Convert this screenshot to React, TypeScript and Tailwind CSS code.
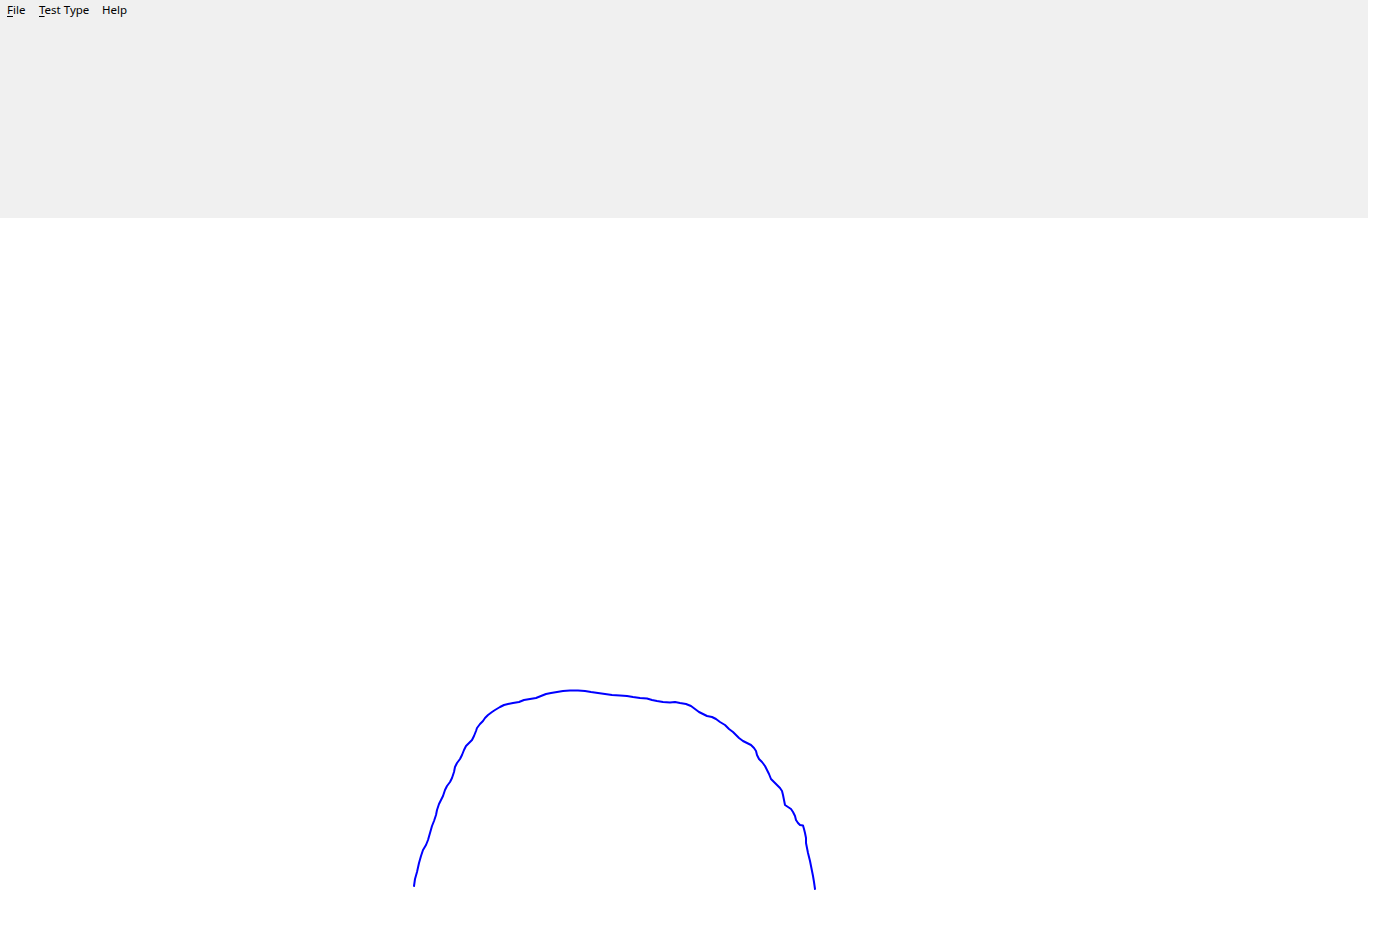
import React from 'react';

const curve: [number, number][] = [
  [414, 886], [415, 879], [417, 872], [419, 863], [421, 856], [423, 850], [426, 845], [428, 840],
  [430, 833], [432, 826], [434, 821], [436, 815], [437, 810], [439, 804], [441, 800], [443, 796],
  [445, 790], [447, 786], [450, 782], [452, 778], [454, 772], [455, 767], [457, 763], [460, 759],
  [462, 755], [464, 750], [466, 746], [469, 743], [472, 740], [474, 736], [476, 731], [477, 728],
  [480, 724], [483, 721], [485, 718], [488, 715], [492, 712], [495, 710], [500, 707], [504, 705],
  [508, 704], [513, 703], [519, 702], [524, 700], [530, 699], [536, 698], [541, 696], [546, 694],
  [551, 693], [557, 692], [563, 691], [570, 690.5], [578, 690.5], [585, 691], [591, 692], [598, 693],
  [605, 694], [612, 695], [620, 695.5], [627, 696], [633, 697], [640, 698], [647, 698.5], [652, 700],
  [657, 701], [663, 702], [670, 702.5], [675, 702], [680, 703], [686, 704], [691, 706], [695, 709],
  [699, 712], [703, 714], [707, 716], [712, 717], [716, 719], [720, 722], [725, 725], [729, 729],
  [733, 732], [736, 735], [739, 738], [743, 741], [747, 743], [751, 745], [754, 748], [756, 751],
  [757, 755], [759, 759], [762, 762], [765, 766], [767, 770], [769, 774], [771, 779], [774, 782],
  [777, 785], [780, 788], [782, 791], [783, 795], [784, 800], [785, 805], [788, 807], [791, 809],
  [793, 812], [795, 816], [796, 820], [798, 823], [800, 825], [803, 825.5], [804, 829], [805, 833],
  [806, 838], [806, 843], [807, 848], [808, 853], [809, 857], [810, 861], [811, 866], [812, 871],
  [813, 876], [814, 882], [815, 889],
];

const TOP = 218;

const MenuItem: React.FC<{ first: string; rest: string; className: string }> = ({ first, rest, className }) => (
  <span className={className}>
    <span className="underline underline-offset-[2px]">{first}</span>
    {rest}
  </span>
);

export default function App() {
  const points = curve.map(([x, y]) => `${x},${y - TOP}`).join(' ');

  return (
    <div className="w-[1381px] h-[925px] bg-white overflow-hidden" style={{ fontFamily: '"Noto Sans", "Open Sans", sans-serif' }}>
      <div className="w-[1368px] h-[218px] bg-[#f0f0f0]">
        <div className="flex items-center h-[20px] text-[11.5px] text-black leading-none pl-[7px]">
          <MenuItem first="F" rest="ile" className="w-[32px]" />
          <MenuItem first="T" rest="est Type" className="w-[63px]" />
          <span>Help</span>
        </div>
      </div>
      <svg width="1381" height="707" viewBox="0 0 1381 707" className="block">
        <polyline points={points} fill="none" stroke="#0000ff" strokeWidth="2" strokeLinejoin="round" strokeLinecap="round" />
      </svg>
    </div>
  );
}
